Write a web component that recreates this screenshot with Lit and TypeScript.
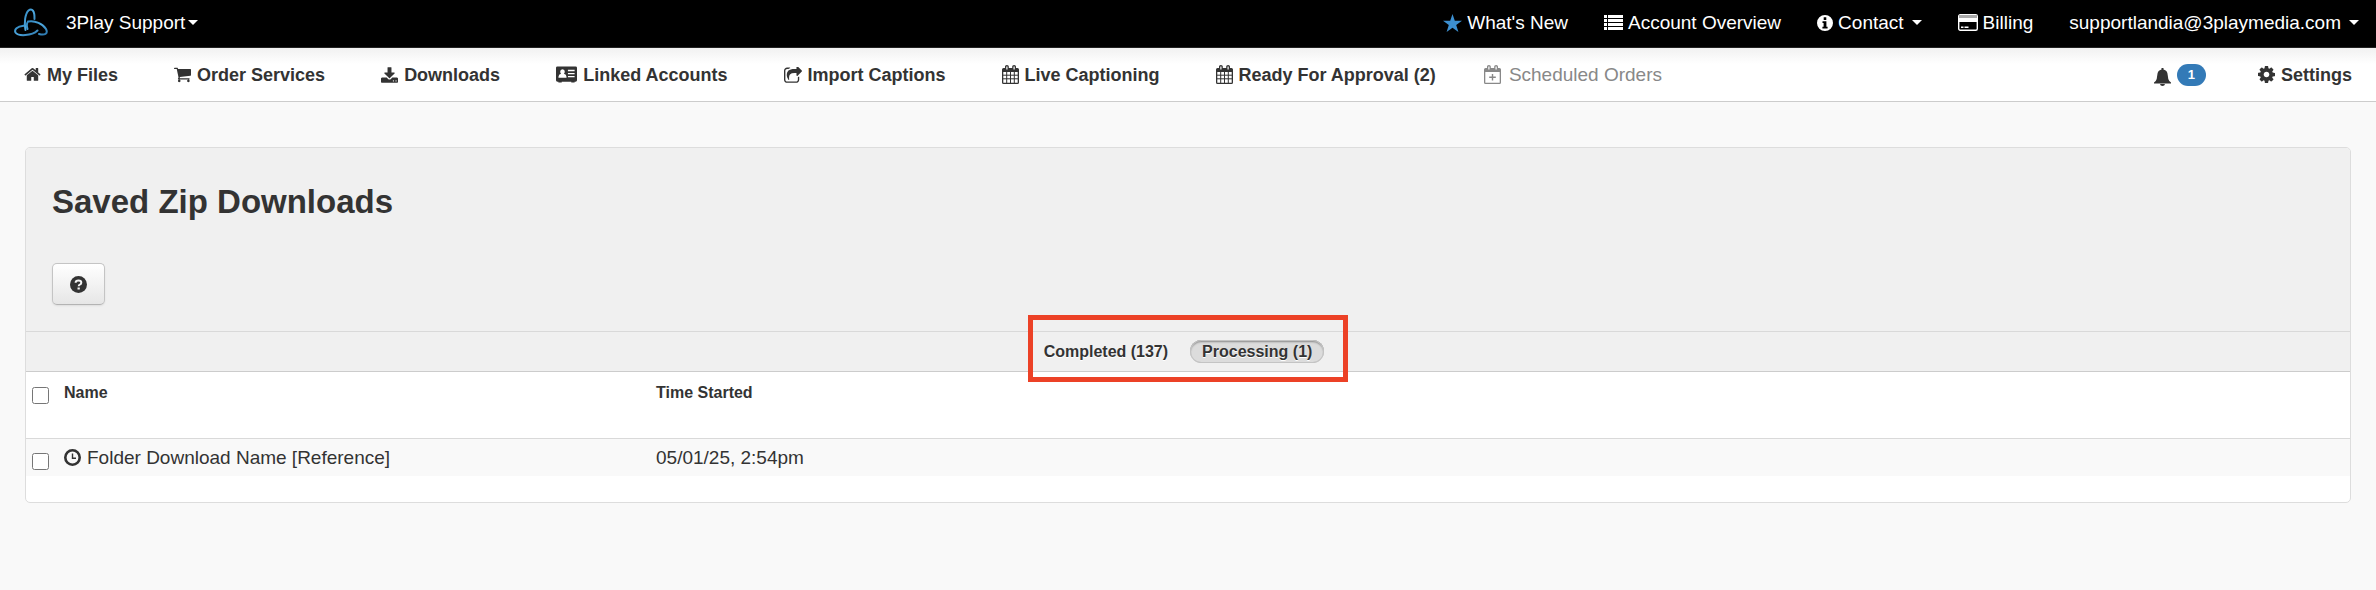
import { LitElement, html, css, svg, TemplateResult } from "lit";
import { customElement, state } from "lit/decorators.js";

const HOME = "M1472 992v480q0 26-19 45t-45 19h-384v-384h-256v384h-384q-26 0-45-19t-19-45v-480q0-1 .5-3t.5-3l575-474 575 474q1 2 1 6zm223-69l-62 74q-8 9-21 11h-3q-13 0-21-7l-692-577-692 577q-12 8-24 7-13-2-21-11l-62-74q-8-10-7-23.5t11-21.5l719-599q32-26 76-26t76 26l244 204v-195q0-14 9-23t23-9h192q14 0 23 9t9 23v408l219 182q10 8 11 21.5t-7 23.5z";
const CART = "M704 1536q0 52-38 90t-90 38-90-38-38-90 38-90 90-38 90 38 38 90zm896 0q0 52-38 90t-90 38-90-38-38-90 38-90 90-38 90 38 38 90zm128-1088v512q0 24-16.5 42.5t-40.5 21.5l-1044 122q13 60 13 70 0 16-24 64h920q26 0 45 19t19 45-19 45-45 19h-1024q-26 0-45-19t-19-45q0-11 8-31.5t16-36 21.5-40 15.5-29.5l-177-823h-204q-26 0-45-19t-19-45 19-45 45-19h256q16 0 28.5 6.5t19.5 15.5 13 24.5 8 26 5.5 29.5 4.5 26h1201q26 0 45 19t19 45z";
const DOWNLOAD = "M1344 1344q0-26-19-45t-45-19-45 19-19 45 19 45 45 19 45-19 19-45zm256 0q0-26-19-45t-45-19-45 19-19 45 19 45 45 19 45-19 19-45zm128-224v320q0 40-28 68t-68 28h-1472q-40 0-68-28t-28-68v-320q0-40 28-68t68-28h465l135 136q58 56 136 56t136-56l136-136h464q40 0 68 28t28 68zm-325-569q17 41-14 70l-448 448q-18 19-45 19t-45-19l-448-448q-31-29-14-70 17-39 59-39h256v-448q0-26 19-45t45-19h256q26 0 45 19t19 45v448h256q42 0 59 39z";
const SHARE = "M1472 989v259q0 119-84.5 203.5t-203.5 84.5h-832q-119 0-203.5-84.5t-84.5-203.5v-832q0-119 84.5-203.5t203.5-84.5h255q13 0 22.5 9.5t9.5 22.5q0 27-26 32-77 26-133 60-10 4-16 4h-112q-66 0-113 47t-47 113v832q0 66 47 113t113 47h832q66 0 113-47t47-113v-214q0-19 18-29 28-13 54-37 16-16 35-8 21 9 21 29zm237-496l-384 384q-18 19-45 19-12 0-25-5-39-17-39-59v-192h-160q-323 0-438 131-119 137-74 473 3 23-20 34-8 2-12 2-16 0-26-13-10-14-21-31t-39.5-68.5-49.5-99.5-38.5-114-17.5-122q0-49 3.5-91t14-90 28-88 47-81.5 68.5-74 94.5-61.5 124.5-48.5 159.5-30.5 196.5-11h160v-192q0-42 39-59 13-5 25-5 26 0 45 19l384 384q19 19 19 45t-19 45z";
const COG = "M1152 896q0-106-75-181t-181-75-181 75-75 181 75 181 181 75 181-75 75-181zm512-109v222q0 12-8 23t-20 13l-185 28q-19 54-39 91 35 50 107 138 10 12 10 25t-9 23q-27 37-99 108t-94 71q-12 0-26-9l-138-108q-44 23-91 38-16 136-29 186-7 28-36 28h-222q-14 0-24.5-8.5t-11.5-21.5l-28-184q-49-16-90-37l-141 107q-10 9-25 9-14 0-25-11-126-114-165-168-7-10-7-23 0-12 8-23 15-21 51-66.5t54-70.5q-27-50-41-99l-183-27q-13-2-21-12.5t-8-23.5v-222q0-12 8-23t19-13l186-28q14-46 39-92-40-57-107-138-10-12-10-24 0-10 9-23 26-36 98.5-107.5t94.5-71.5q13 0 26 10l138 107q44-23 91-38 16-136 29-186 7-28 36-28h222q14 0 24.5 8.5t11.5 21.5l28 184q49 16 90 37l142-107q9-9 24-9 13 0 25 10 129 119 165 170 7 8 7 22 0 12-8 23-15 21-51 66.5t-54 70.5q26 50 41 98l183 28q13 2 21 12.5t8 23.5z";

const icon = (width: number, height: number, viewBox: string, body: TemplateResult) =>
  html`<svg class="icon" width=${width} height=${height} viewBox=${viewBox} fill="currentColor" aria-hidden="true">${body}</svg>`;

const calendarFrame = svg`
  <path fill-rule="evenodd" d="M1.5 3H3V1.8C3 .8 3.7 0 4.9 0S6.800 .8 6.800 1.800V3H10.200V1.800C10.200 .8 10.900 0 12.100 0S14 .8 14 1.800V3H15.500Q17 3 17 4.500V17.500Q17 19 15.500 19H1.500Q0 19 0 17.500V4.500Q0 3 1.500 3ZM1.300 7V17.700H15.700V7ZM4.300 1.500V4.600H5.500V1.500ZM11.500 1.500V4.600H12.700V1.500Z"/>`;

const icons = {
  home: icon(17, 15, "40 250 1712 1300", svg`<path d=${HOME}/>`),
  cart: icon(17, 16, "64 256 1664 1408", svg`<path d=${CART}/>`),
  download: icon(17, 16, "64 0 1664 1536", svg`<path d=${DOWNLOAD}/>`),
  share: icon(18, 16, "64 90 1664 1450", svg`<path d=${SHARE}/>`),
  cog: icon(17, 17, "128 128 1536 1536", svg`<path d=${COG}/>`),
  card: icon(21, 17, "0 0 22 17", svg`
    <path fill-rule="evenodd" d="M1.500 0H20.500Q22 0 22 1.500V14.500Q22 16 20.500 16H19.500V17H16V16H6V17H2.500V16H1.500Q0 16 0 14.500V1.500Q0 0 1.500 0ZM12.500 3.500V5H19.500V3.500ZM12.500 6.800V8.300H19.500V6.800ZM12.500 10V11.500H19.500V10Z"/>
    <path fill="#fff" d="M6.800 3Q9.300 3.200 9.200 5.600Q9 7 8.300 7.700Q11 8.300 11 10.800V12H2.600V10.800Q2.600 8.300 5.300 7.700Q4.500 7 4.400 5.600Q4.400 3.100 6.800 3Z"/>`),
  calendar: icon(17, 19, "0 0 17 19", svg`${calendarFrame}<path d="M1 10.200H16M1 13.800H16M4.700 7V18M8.500 7V18M12.300 7V18" stroke="currentColor" stroke-width="1" fill="none"/>`),
  calendarPlus: icon(17, 19, "0 0 17 19", svg`${calendarFrame}<path d="M8.500 9V15.600M5.200 12.300H11.800" stroke="currentColor" stroke-width="1.400" fill="none"/>`),
  star: icon(19, 18, "0 0 19 18", svg`<path fill="#3c8fd0" d="M9.500 0L11.800 6.800H19L13.200 11L15.400 18L9.500 13.800L3.600 18L5.800 11L0 6.800H7.200Z"/>`),
  list: icon(19, 15, "0 0 19 15", svg`<path d="M0 0h3v3H0zM4 0h15v3H4zM0 4h3v3H0zM4 4h15v3H4zM0 8h3v3H0zM4 8h15v3H4zM0 12h3v3H0zM4 12h15v3H4z"/>`),
  info: icon(16, 16, "0 0 16 16", svg`<path fill-rule="evenodd" d="M8 0a8 8 0 1 1 0 16a8 8 0 1 1 0-16zM6.700 2.300V4.900H9.300V2.300ZM5.500 6.300V8H6.600V11.800H5.400V13.500H10.600V11.800H9.400V6.300Z"/>`),
  billing: icon(20, 17, "0 0 20 17", svg`<rect x=".7" y=".7" width="18.600" height="15.600" rx="1.500" fill="none" stroke="currentColor" stroke-width="1.400"/><path fill="#aaa" d="M1 1h18v3H1z"/><path d="M1 4h18v4H1zM3 12.500h2.500V14H3zM6.500 12.500h4V14h-4z"/>`),
  bell: icon(17, 22, "0 -4 17 22", svg`<path d="M7.500 0h2v1.500Q13.500 2.300 13.700 7Q14 11.500 15.300 13L17 14.500V15.500H0V14.500L1.700 13Q3 11.500 3.300 7Q3.500 2.300 7.500 1.500ZM6 16h5Q10.700 18 8.500 18T6 16Z"/>`),
  question: icon(17, 17, "0 0 17 17", svg`<circle cx="8.500" cy="8.500" r="8.500"/><path d="M5.600 6.800Q5.700 4.500 8.500 4.500Q11.300 4.500 11.300 6.700Q11.300 8 9.800 8.600Q8.700 9 8.700 10.200" stroke="#f4f4f4" stroke-width="2" fill="none"/><path d="M7.500 11.500h2.300v2H7.500z" fill="#f4f4f4"/>`),
  clock: icon(17, 17, "0 0 17 17", svg`<circle cx="8.500" cy="8.500" r="7.200" fill="none" stroke="currentColor" stroke-width="2.600"/><path d="M8.500 4.500V9.200H12" fill="none" stroke="currentColor" stroke-width="1.400"/>`),
  caret: icon(10, 5, "0 0 10 5", svg`<path d="M0 0h10L5 5z"/>`),
};

const NAV = [
  { label: "My Files", icon: icons.home },
  { label: "Order Services", icon: icons.cart },
  { label: "Downloads", icon: icons.download },
  { label: "Linked Accounts", icon: icons.card },
  { label: "Import Captions", icon: icons.share },
  { label: "Live Captioning", icon: icons.calendar },
  { label: "Ready For Approval (2)", icon: icons.calendar },
];

@customElement("app-root")
export class AppRoot extends LitElement {
  @state() private tab = "processing";

  static styles = css`
    :host {
      display: block;
      min-height: 100vh;
      background: #f9f9f9;
      color: #333;
      font: 19px/24px "Liberation Sans", Arial, Helvetica, sans-serif;
    }
    * { box-sizing: border-box; }
    .icon { display: block; flex: none; }
    a { color: inherit; text-decoration: none; }
    button { font: inherit; color: inherit; cursor: pointer; }

    .topbar {
      display: flex;
      align-items: center;
      justify-content: space-between;
      height: 48px;
      padding: 0 17px 2px 14px;
      background: #000;
      border-bottom: 1px solid #222;
      color: #fff;
    }
    .brand, .top-links { display: flex; align-items: center; }
    .brand { gap: 18px; }
    .top-links { gap: 36px; }
    .top-item {
      display: flex;
      align-items: center;
      gap: 5px;
      padding: 0;
      border: 0;
      background: none;
      white-space: nowrap;
    }
    .account { gap: 3px; }
    .menu { gap: 8px; }

    .navbar {
      display: flex;
      align-items: center;
      justify-content: space-between;
      height: 54px;
      padding: 0 24px;
      border-bottom: 1px solid #ccc;
      background: linear-gradient(#f1f1f1, #fff 16px);
      font-size: 18px;
      font-weight: bold;
    }
    .nav-list, .nav-side { display: flex; align-items: center; }
    .nav-list { gap: 56px; }
    .nav-side { gap: 52px; }
    .nav-item { display: flex; align-items: center; gap: 6px; white-space: nowrap; }
    .scheduled {
      margin-left: -8px;
      gap: 8px;
      color: #888;
      font-size: 19px;
      font-weight: normal;
    }
    .badge {
      padding: 0 11px;
      border-radius: 11px;
      background: #337ab7;
      color: #fff;
      font-size: 13px;
      line-height: 22px;
    }

    .panel {
      margin: 45px 25px 0;
      border: 1px solid #ddd;
      border-radius: 5px;
      background: #fff;
    }
    .panel-head {
      padding: 34px 26px 26px;
      border-bottom: 1px solid #d9d9d9;
      border-radius: 4px 4px 0 0;
      background: #f0f0f0;
    }
    .title { margin: 0 0 41px; font-size: 33px; line-height: 40px; }
    .help {
      display: grid;
      place-items: center;
      width: 53px;
      height: 42px;
      padding: 0;
      border: 1px solid #c4c4c4;
      border-bottom-color: #b3b3b3;
      border-radius: 5px;
      background: linear-gradient(#fff, #e6e6e6);
      box-shadow: 0 1px 2px rgba(0, 0, 0, 0.08);
    }
    .tabbar {
      display: flex;
      justify-content: center;
      height: 40px;
      border-bottom: 1px solid #ccc;
      background: #f0f0f0;
    }
    .tabs {
      position: relative;
      display: flex;
      align-items: center;
      gap: 10px;
      padding: 0 24px 0 4px;
    }
    .tabs::after {
      content: "";
      position: absolute;
      inset: -17px 0 -11px;
      border: 5px solid #ec4126;
      pointer-events: none;
    }
    .tab {
      height: 23px;
      padding: 0 12px;
      border: 0;
      border-radius: 12px;
      background: none;
      font-size: 16px;
      font-weight: bold;
      line-height: 23px;
      text-shadow: 0 1px 0 #fff;
    }
    .tab[aria-selected="true"] {
      background: #dcdcdc;
      box-shadow: inset 0 0 0 1px #c4c4c4, inset 0 2px 2px #8a8a8a;
    }

    .table { width: 100%; border-collapse: collapse; table-layout: fixed; }
    .check-col { width: 38px; }
    .name-col { width: 592px; }
    .table th, .table td { padding: 0; text-align: left; vertical-align: top; }
    .head-row { height: 66px; border-bottom: 1px solid #d9d9d9; }
    .head-row th { padding-top: 9px; font-size: 16px; }
    .data-row { height: 38px; background: #f9f9f9; }
    .table .data-row td { padding-top: 7px; }
    .table .check-cell { padding: 15px 0 0 6px; }
    .table .data-row .check-cell { padding-top: 14px; }
    .check { display: block; width: 17px; height: 17px; margin: 0; }
    .file { display: flex; align-items: center; gap: 6px; }
    .panel-foot { height: 26px; }
  `;

  private renderTab(id: string, label: string) {
    return html`<button class="tab" role="tab" aria-selected=${this.tab === id ? "true" : "false"}
      @click=${() => (this.tab = id)}>${label}</button>`;
  }

  render() {
    return html`
      <header class="topbar">
        <div class="brand">
          <a href="#" aria-label="3Play Media">
            <svg class="icon" width="34" height="29" viewBox="0 0 34 29" fill="none" stroke-linecap="round" aria-hidden="true">
              <defs>
                <linearGradient id="ring" x1="0" y1="0" x2="1" y2="1">
                  <stop offset="0" stop-color="#3187bf" /><stop offset=".5" stop-color="#4fa9e0" /><stop offset="1" stop-color="#2a74ab" />
                </linearGradient>
              </defs>
              <g stroke="url(#ring)" stroke-width="2">
                <path d="M11.500 22C10 15 11 6 14.500 2.500C18 -.5 20.800 3 20.500 11" />
                <path d="M13.500 21C12.500 18 12.500 15.500 14 13.500C21 12 29 16 32 21C34.500 26 30.500 27.500 25 26" />
                <path d="M9.500 17.800C3 18.500 0 21.500 1.500 24.500C4 28.500 18 28 23.500 22.500" />
              </g>
            </svg>
          </a>
          <button class="top-item account">3Play Support ${icons.caret}</button>
        </div>
        <nav class="top-links" aria-label="Account">
          <a class="top-item" href="#">${icons.star}What's New</a>
          <a class="top-item" href="#">${icons.list}Account Overview</a>
          <button class="top-item menu"><span class="top-item">${icons.info}Contact</span>${icons.caret}</button>
          <a class="top-item" href="#">${icons.billing}Billing</a>
          <button class="top-item menu">supportlandia@3playmedia.com${icons.caret}</button>
        </nav>
      </header>

      <nav class="navbar" aria-label="Main">
        <div class="nav-list">
          ${NAV.map((item) => html`<a class="nav-item" href="#">${item.icon}${item.label}</a>`)}
          <a class="nav-item scheduled" href="#">${icons.calendarPlus}Scheduled Orders</a>
        </div>
        <div class="nav-side">
          <a class="nav-item" href="#" aria-label="Notifications">${icons.bell}<span class="badge">1</span></a>
          <a class="nav-item" href="#">${icons.cog}Settings</a>
        </div>
      </nav>

      <main class="panel">
        <div class="panel-head">
          <h1 class="title">Saved Zip Downloads</h1>
          <button class="help" aria-label="Help">${icons.question}</button>
        </div>
        <div class="tabbar">
          <div class="tabs" role="tablist">
            ${this.renderTab("completed", "Completed (137)")}
            ${this.renderTab("processing", "Processing (1)")}
          </div>
        </div>
        <table class="table">
          <colgroup><col class="check-col" /><col class="name-col" /><col /></colgroup>
          <thead>
            <tr class="head-row">
              <th class="check-cell"><input class="check" type="checkbox" aria-label="Select all" /></th>
              <th>Name</th>
              <th>Time Started</th>
            </tr>
          </thead>
          <tbody>
            <tr class="data-row">
              <td class="check-cell"><input class="check" type="checkbox" aria-label="Select Folder Download Name" /></td>
              <td><span class="file">${icons.clock}Folder Download Name [Reference]</span></td>
              <td>05/01/25, 2:54pm</td>
            </tr>
          </tbody>
        </table>
        <div class="panel-foot"></div>
      </main>
    `;
  }
}
